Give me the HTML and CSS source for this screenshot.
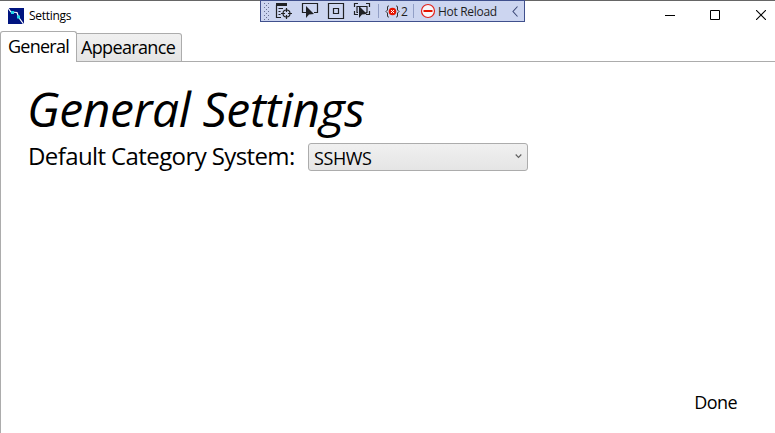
FILE: index.html
```html
<!DOCTYPE html>
<html lang="en">
<head>
<meta charset="utf-8">
<title>Settings</title>
<link rel="stylesheet" href="styles.css">
</head>
<body>
<div class="window">
  <header class="titlebar">
    <svg class="app-icon" width="16" height="16" viewBox="0 0 16 16"><path fill="#001480" d="M0 0h16v16H0z"/><path d="M0 0l3 4 6 .5 1.500 4.500 5 7" fill="none" stroke="#fff" stroke-width="1.200"/><path fill="#20d8e8" d="M3 3h3v3H3zM9 7.500h3v3H9z"/></svg>
    <span class="title">Settings</span>
    <div class="controls">
      <svg width="10" height="10"><path d="M0 5.500h10" stroke="#000"/></svg>
      <svg width="10" height="10"><path d="M.5.5h9v9h-9z" fill="none" stroke="#000"/></svg>
      <svg width="10" height="10"><path d="M0 0l10 10M10 0L0 10" stroke="#000" stroke-width="1.100"/></svg>
    </div>
  </header>
  <nav class="tabs">
    <div class="tab active"><span>General</span></div>
    <div class="tab"><span>Appearance</span></div>
  </nav>
  <main class="panel">
    <h1>General Settings</h1>
    <div class="row">
      <span class="label">Default Category System:</span>
      <div class="select"><span>SSHWS</span>
        <svg width="7" height="5"><path d="M.7.5l2.800 3L6.300.5" fill="none" stroke="#606060" stroke-width="1.100"/></svg>
      </div>
    </div>
    <div class="done">Done</div>
  </main>
</div>
<div class="debugbar">
  <svg width="265" height="22" viewBox="0 0 265 22">
    <defs><pattern id="grip" x="4" y="3" width="4" height="4" patternUnits="userSpaceOnUse"><path fill="#687092" d="M0 0h1v1H0zM2 2h1v1H2z"/></pattern></defs>
    <path fill="url(#grip)" d="M4 2h6v18H4z"/>
    <g fill="none" stroke="#202124" stroke-width="1.200">
      <path fill="#202124" stroke="none" d="M16 3h11v3H16z"/>
      <path d="M16.500 5v12.500H21M18.500 8.500H23M18.500 11.500h2M18.500 14.500h2"/>
      <circle cx="26.500" cy="13.500" r="3.500"/><path d="M26.500 8v4M26.500 15v4M21 13.500h4M28 13.500h4"/>
      <path d="M48 12.500h-5.500V3.500h15v9H54"/><path fill="#202124" stroke="none" d="M46 6v12l3-3.500 5-.5z"/>
      <path d="M68.500 3.500h15v15h-15zM73.500 8.500h5v5h-5z"/>
      <path d="M94.500 7V3.500H98M106 3.500h3.500V7M94.500 11v3.500H98M106 14.500h3.500V11M98 12.500h-1v-6h10v6h-1.500"/><path fill="#202124" stroke="none" d="M99 6v12l3-3.500 5-.5z"/>
    </g>
    <path d="M118.500 4v14M153.500 4v14" stroke="#929fc6"/>
    <path d="M129 6h-.5q-1 0-1 1v3l-1.500 1.500 1.500 1.500v3q0 1 1 1h.5M136 6h.5q1 0 1 1v3l1.500 1.500-1.500 1.500v3q0 1-1 1h-.5" fill="none" stroke="#333"/>
    <circle cx="132.500" cy="11.500" r="3.800" fill="#e51400"/><path d="M131 10l3 3M134 10l-3 3" stroke="#fff"/>
    <circle cx="168" cy="11" r="6.500" fill="#f8f7fa" stroke="#e0211b" stroke-width="1.200"/><path d="M163.500 11h9" stroke="#e51400" stroke-width="2"/>
    <path d="M257.500 6.500l-4.500 5 4.500 5" fill="none" stroke="#3e4a78" stroke-width="1.100"/>
  </svg>
  <span class="count">2</span><span class="reload">Hot Reload</span>
</div>
</body>
</html>
```

FILE: styles.css
```css
* { box-sizing: border-box; }
body { margin: 0; background: #fff; color: #000; font-family: "Open Sans", "Noto Sans", sans-serif; overflow: hidden; }
svg { display: block; }
.window { height: 433px; display: flex; flex-direction: column; border-top: 1px solid #666; }
.titlebar { height: 30px; display: flex; align-items: center; padding: 0 9px 0 8px; }
.app-icon { margin-top: -1px; }
.title { margin-left: 5px; font-size: 12px; line-height: 16px; letter-spacing: -.3px; }
.controls { margin-left: auto; display: flex; gap: 35px; margin-top: -2px; }
.controls svg:nth-child(-n+2) { margin-left: -1px; margin-right: 1px; }
.tabs { height: 31px; display: flex; align-items: flex-end; position: relative; z-index: 1; }
.tab { height: 29px; width: 105px; padding: 0 4px; border: 1px solid #acacac; border-left: 0; border-radius: 0 3px 0 0; background: linear-gradient(#f0f0f0, #e5e5e5); font-size: 18px; line-height: 27px; letter-spacing: -.65px; white-space: nowrap; }
.tab.active { width: 77px; height: 31px; padding: 0 7px; border-left: 1px solid #acacac; border-bottom: 0; border-radius: 3px 3px 0 0; background: #fff; line-height: 29px; letter-spacing: -.75px; }
.panel { flex: 1; margin-top: -1px; padding: 23px 27px; border: 1px solid #acacac; border-right: 0; border-bottom: 0; display: flex; flex-direction: column; }
h1 { margin: 0; font-size: 48px; font-weight: 400; font-style: italic; line-height: 48px; height: 54px; letter-spacing: -.4px; text-indent: -1px; white-space: nowrap; }
.row { display: flex; align-items: center; height: 34px; margin-top: 1px; }
.label { width: 280px; margin-top: -2px; font-size: 24px; line-height: 24px; letter-spacing: -.6px; white-space: nowrap; }
.select { width: 220px; height: 28px; padding: 0 5px; display: flex; align-items: center; justify-content: space-between; border: 1px solid #acacac; border-radius: 3px; background: linear-gradient(#f0f0f0, #e5e5e5); font-size: 18px; line-height: 26px; letter-spacing: -.4px; }
.select span { margin-top: 2px; }
.select svg { margin-top: -1px; }
.done { margin-top: auto; align-self: flex-end; margin-right: 11px; font-size: 18px; line-height: 26px; letter-spacing: -.6px; margin-bottom: -5px; }
.debugbar { position: absolute; left: 260px; top: 0; width: 265px; height: 22px; background: #ccd5f0; z-index: 3; box-shadow: inset 0 0 0 1px #40508d; font-size: 12px; line-height: 22px; color: #1e1e1e; }
.count, .reload { position: absolute; top: 1px; white-space: nowrap; }
.count { left: 141px; }
.reload { left: 178px; letter-spacing: -.3px; }
```
